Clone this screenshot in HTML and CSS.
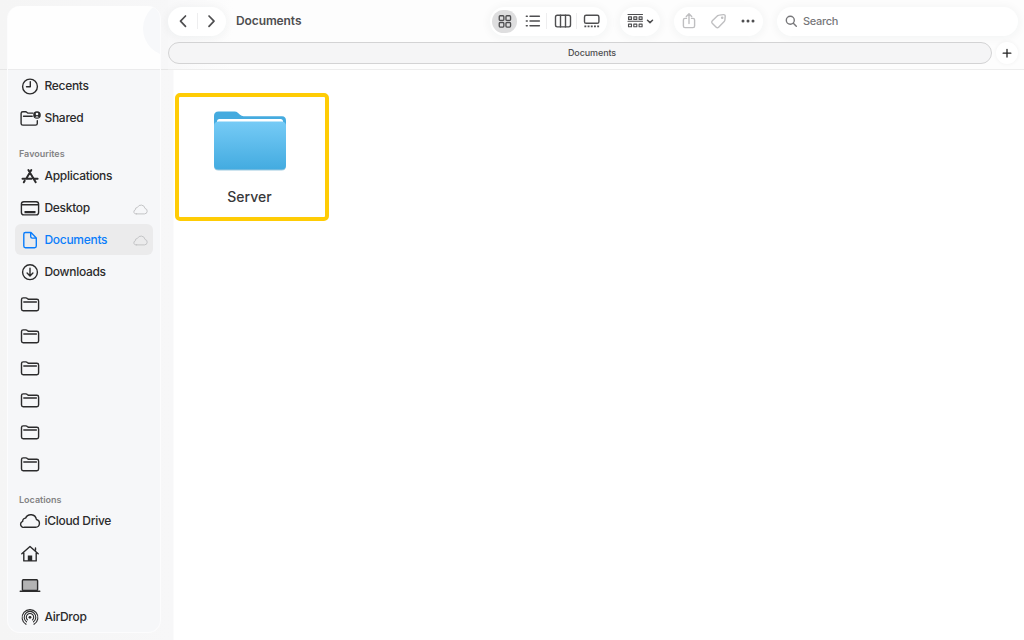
FILE: index.html
```
<!DOCTYPE html>
<html lang="en">
<head>
<meta charset="utf-8">
<title>Documents</title>
<link rel="stylesheet" href="styles.css">
</head>
<body>

<svg class="defs" width="0" height="0">
  <symbol id="folder" viewBox="0 0 24 24"><path d="M3.500 17V7.600q0-1.700 1.700-1.700h2.700q.8 0 1.400.6l.5.4q.5.4 1.200.4h7.900q1.700 0 1.700 1.700v8q0 1.700-1.700 1.700H5.200q-1.700 0-1.700-1.700zM5.800 10h12.600"/></symbol>
  <symbol id="cloud" viewBox="0 0 24 24"><path d="M6.600 18.200h11a3.900 3.900 0 0 0 .8-7.700A5.700 5.700 0 0 0 7.600 9.100a3 3 0 0 0-2.900 3.300 3 3 0 0 0 1.900 5.800z"/></symbol>
</svg>

<div class="window">
  <div class="sidebar">
    <div class="panel">
      <div class="glow"></div>
      <ul>
        <li><svg viewBox="0 0 24 24"><circle cx="12" cy="12.500" r="7.400"/><path d="M12.300 7.800v5H8.500"/></svg>Recents</li>
        <li><svg viewBox="0 0 24 24"><path d="M15 7.100h-4.600q-.6 0-1.100-.4l-.5-.4q-.5-.6-1.300-.6H4.900q-1.800 0-1.800 1.700v10q0 1.700 1.800 1.700h12.600q1.800 0 1.800-1.700v-2.600M5.500 10.300h8.700"/><circle class="solid" cx="19" cy="9" r="3.800"/><path class="cut" d="M17.200 11.400q1.800-2.200 3.600 0z"/><circle class="cut" cx="19" cy="8" r="1.300"/></svg>Shared</li>
      </ul>
      <h2>Favourites</h2>
      <ul>
        <li><svg viewBox="0 0 24 24" class="heavy"><path d="M10.400 6l7.300 12.200M13.300 6l-5.100 8.800M4.500 14.700h9M16.200 14.700h3.400M6.700 16.800l-.9 1.500"/></svg>Applications</li>
        <li><svg viewBox="0 0 24 24"><rect x="3.400" y="5.700" width="17.200" height="13.200" rx="2.400"/><path d="M3.800 8.700h16.400"/><path class="bar" d="M6.500 16.200h11"/></svg>Desktop<svg class="sync" viewBox="0 0 24 24"><use href="#cloud"/></svg></li>
        <li class="selected"><svg viewBox="0 0 24 24"><path d="M13 4.500H7.400Q5.800 4.500 5.800 6.200v11.900q0 1.700 1.600 1.700h9.200q1.700 0 1.700-1.700V9.900zM12.700 4.700v3.900q0 1.500 1.500 1.500h3.900"/></svg>Documents<svg class="sync" viewBox="0 0 24 24"><use href="#cloud"/></svg></li>
        <li><svg viewBox="0 0 24 24"><circle cx="12" cy="12.200" r="7.400"/><path d="M12 8.200v7.600M9.100 13.100l2.900 2.900 2.900-2.900"/></svg>Downloads</li>
        <li><svg><use href="#folder"/></svg></li>
        <li><svg><use href="#folder"/></svg></li>
        <li><svg><use href="#folder"/></svg></li>
        <li><svg><use href="#folder"/></svg></li>
        <li><svg><use href="#folder"/></svg></li>
        <li><svg><use href="#folder"/></svg></li>
      </ul>
      <h2 class="locations">Locations</h2>
      <ul>
        <li><svg><use href="#cloud"/></svg>iCloud Drive</li>
        <li><svg viewBox="0 0 24 24"><path d="M3.800 12.700L12 5.400l8.200 7.300M5.800 11.700v8.200h12.400v-8.200M17.500 9.300V6.900"/><path class="solid" d="M9.800 19.900v-5.300h4.400v5.300z"/></svg></li>
        <li><svg viewBox="0 0 24 24"><rect class="screen" x="4.400" y="6.700" width="15.200" height="10.800" rx="1"/><path d="M2.200 18.300h19.600"/></svg></li>
        <li><svg viewBox="0 0 24 24" class="thin"><path d="M8 19.300a7.900 7.900 0 1 1 8 0M8.500 16.800a5.800 5.800 0 1 1 7 0M9.500 14.900a3.700 3.700 0 1 1 5 0"/><circle class="solid" cx="12" cy="12.300" r="1.400"/></svg>AirDrop</li>
      </ul>
    </div>
  </div>

  <div class="main">
    <div class="top">
      <div class="toolbar">
        <div class="pill nav">
          <svg viewBox="0 0 24 24"><path d="M14.500 7l-5 5.200 5 5.200"/></svg>
          <i></i>
          <svg viewBox="0 0 24 24"><path d="M10 7l5 5.200-5 5.200"/></svg>
        </div>
        <h1>Documents</h1>
        <div class="pill views">
          <span class="on"><svg viewBox="0 0 24 24"><rect x="6" y="6" width="4.800" height="4.800" rx="1"/><rect x="13" y="6" width="4.800" height="4.800" rx="1"/><rect x="6" y="13" width="4.800" height="4.800" rx="1"/><rect x="13" y="13" width="4.800" height="4.800" rx="1"/></svg></span>
          <svg viewBox="0 0 24 24"><path d="M10 7.300h9.400M10 12h9.400M10 16.700h9.400M6.300 7.300h1M6.300 12h1M6.300 16.700h1"/></svg>
          <i></i>
          <svg viewBox="0 0 24 24"><rect x="5.500" y="6.300" width="15" height="11.600" rx="1.800"/><path d="M10.500 6.300v11.600M15.500 6.300v11.600"/></svg>
          <i></i>
          <svg viewBox="0 0 24 24"><rect x="4.500" y="6.300" width="14.400" height="8" rx="1.600"/><path class="dots" d="M4.400 17.400h15"/></svg>
        </div>
        <div class="pill group">
          <svg viewBox="0 0 24 24"><path d="M5 5.500h14.500M5 12.300h14.500"/><path d="M5.500 7.900h3v2.500h-3zM10.800 7.900h3v2.500h-3zM16.100 7.900h3v2.500h-3zM5.500 15.100h3v2.600h-3zM10.800 15.100h3v2.600h-3zM16.100 15.100h3v2.600h-3z"/></svg>
          <svg class="chevron" viewBox="0 0 8 24"><path d="M1.500 11.300L4 13.600l2.500-2.300"/></svg>
        </div>
        <div class="pill actions">
          <svg class="off" viewBox="0 0 24 24"><path d="M9.500 9.400H8q-1.600 0-1.600 1.600v6q0 1.600 1.600 1.600h8q1.600 0 1.600-1.600v-6q0-1.600-1.600-1.600h-1.500M12 14.500V5M9.300 7.500L12 4.800l2.700 2.700"/></svg>
          <svg class="off" viewBox="0 0 24 24"><path d="M12.300 6.100l4.200-.5q1.700-.1 1.700 1.500l-.3 3.900q-.1.8-.7 1.400l-5.600 5.800q-1.200 1.200-2.400 0l-4-4q-1.100-1.200.1-2.400l5.500-5.200q.7-.5 1.500-.5z"/><circle cx="15.200" cy="8.700" r=".6"/></svg>
          <svg viewBox="0 0 24 24"><circle class="solid" cx="7" cy="12" r="1.500"/><circle class="solid" cx="12" cy="12" r="1.500"/><circle class="solid" cx="17" cy="12" r="1.500"/></svg>
        </div>
        <div class="pill search">
          <svg viewBox="0 0 24 24"><circle cx="10.300" cy="11.200" r="4"/><path d="M13.300 14.200l3 3"/></svg>Search
        </div>
      </div>
      <div class="tabs">
        <div class="tab">Documents</div>
        <div class="add"><svg viewBox="0 0 24 24"><path d="M12 8v8.400M7.800 12.200h8.400"/></svg></div>
      </div>
    </div>

    <div class="files">
      <div class="file">
        <svg viewBox="0 0 76 62">
          <defs>
            <linearGradient id="front" x1="0" y1="0" x2="0" y2="1"><stop offset="0" stop-color="#76cbf6"/><stop offset="1" stop-color="#43abe0"/></linearGradient>
          </defs>
          <path fill="#45abdf" d="M2 12V6q0-4.500 4.500-4.500h16q2 0 3.300 1.300l2.200 2q1.500 1.400 3.500 1.400H70q4 0 4 4.500v8H2z"/>
          <path fill="#fff" d="M5 15v-3.500q0-2.500 2.500-2.500h61q2.500 0 2.500 2.500V15z"/>
          <path fill="#3b94c2" opacity=".5" d="M2 50h72v6q0 4.600-4.500 4.600h-63Q2 60.600 2 56z"/>
          <path fill="url(#front)" d="M2 16q0-4.600 4.500-4.600h63Q74 11.400 74 16v39q0 4.600-4.500 4.600h-63Q2 59.600 2 55z"/>
        </svg>
        <span>Server</span>
      </div>
    </div>
  </div>
</div>

</body>
</html>
```
FILE: styles.css
```
* { box-sizing: border-box; }
body { margin: 0; font-family: Inter, "Liberation Sans", sans-serif; color: #2b2b2c; background: #fff; }
ul { list-style: none; margin: 0; padding: 0; }
svg { fill: none; stroke: currentColor; stroke-width: 1.4; stroke-linecap: round; stroke-linejoin: round; flex: none; }
.defs { position: absolute; }
.solid { fill: currentColor; stroke: none; }
.window { display: flex; width: 1024px; height: 640px; overflow: hidden; background: linear-gradient(to right, #f5f5f5 0, #f7f7f8 173px, #fff 174px); }

/* sidebar */
.sidebar { width: 168px; padding: 6px 7px 7px 7px; background: linear-gradient(transparent 69px, #e6e6e6 69px, #e6e6e6 70px, transparent 70px); }
.panel { position: relative; height: 627px; padding: 64px 8px 0; border: 1px solid #fcfcfd; border-width: 0 1px 1px; border-radius: 13px; overflow: hidden; background: linear-gradient(#fefefe 63px, #ebebec 63px, #ebebec 64px, #f6f7f9 64px); }
.glow { position: absolute; top: -5px; right: -38px; width: 55px; height: 55px; border-radius: 50%; background: #f7f8fa; }
.panel ul, .panel h2 { margin-left: -1px; margin-right: -1px; }
.panel li { display: flex; align-items: center; height: 32px; padding-left: 3px; font-size: 12px; font-weight: 500; letter-spacing: -.3px; line-height: 16px; }
.panel li svg { width: 24px; height: 24px; margin-right: 2.5px; }
.panel li .sync { width: 17px; height: 17px; margin: 2px 4px 0 auto; color: #c2c3c5; }
.panel li.selected { height: 31px; margin: 0 0 1px; border-radius: 6px; background: #ebebec; color: #0a7dfb; }
.panel h2 { height: 26px; margin-top: 0; margin-bottom: 0; padding: 14px 0 0 4px; font-size: 9px; line-height: 12px; font-weight: 600; color: #838385; }
.panel h2.locations { height: 25px; }
.panel .heavy { stroke-width: 2; }
.panel .thin { stroke-width: 1.1; }
.panel .bar { stroke-width: 2.2; stroke-linecap: butt; }
.cut { fill: #f6f7f9; stroke: none; }
.screen { fill: #b3b3b4; }

/* toolbar */
.main { flex: 1; min-width: 0; }
.top { height: 70px; padding: 6px 6px 0 0; border-bottom: 1px solid #ededed; background: linear-gradient(to right, #f8f8f9, #fdfdfd 65px); }
.toolbar { display: flex; align-items: center; height: 30px; color: #4e4e50; }
.toolbar svg { width: 24px; height: 24px; }
.pill { display: flex; align-items: center; height: 29px; border-radius: 15px; background: #fff; box-shadow: 0 1px 9px 2px rgba(30, 40, 60, .04); }
.pill i { width: 1px; height: 16px; background: #eeeeef; }
.nav { width: 58px; padding: 0 3px; justify-content: space-between; }
.nav svg { stroke-width: 1.7; }
h1 { width: 254px; margin: 0; padding-left: 10px; font-size: 12px; font-weight: 600; line-height: 16px; letter-spacing: -.1px; margin-right: 10px; }
.views { width: 117px; padding: 0 3px 0 2px; justify-content: space-between; }
.on { display: flex; width: 25px; height: 23px; border-radius: 12px; background: #dededf; justify-content: center; }
.toolbar .on svg { height: 23px; }
.dots { stroke-width: 1.9; stroke-linecap: butt; stroke-dasharray: 1.9 1.3; }
.group { width: 40px; margin-left: 13px; padding-left: 3px; }
.toolbar .chevron { width: 8px; margin-left: -1px; stroke-width: 1.5; }
.group svg:first-child { stroke-width: 1.1; }
.actions { width: 89px; margin-left: 14px; padding: 0 3px; justify-content: space-between; }
.off { color: #bfbfc1; }
.search { flex: 1; margin-left: 14px; padding-left: 3px; font-size: 11px; font-weight: 500; letter-spacing: -.3px; color: #77777a; }
.search svg { margin-right: -1px; }

/* tab strip */
.tabs { display: flex; margin-top: 6px; gap: 4px; }
.tab { width: 824px; height: 22px; border: 1px solid #d3d3d4; border-radius: 11px; background: #f5f5f6; text-align: center; padding-left: 24px; font-size: 9px; font-weight: 500; line-height: 20px; letter-spacing: -.1px; color: #4e4e50; }
.add { width: 22px; height: 22px; border-radius: 50%; background: #fff; box-shadow: 0 0 4px rgba(0, 0, 0, .05); }
.add svg { display: block; width: 22px; height: 22px; color: #222; stroke-width: 1.4; }

/* files */
.files { padding: 23px 0 0 7px; }
.file { display: flex; flex-direction: column; align-items: center; width: 154px; height: 128px; padding: 13px 5px 0 0; border: 4px solid #ffcc05; border-radius: 5px; background: #fff; }
.file svg { width: 76px; height: 62px; stroke: none; }
.file span { margin-top: 15px; font-size: 14px; font-weight: 500; line-height: 20px; color: #38383a; }
```
